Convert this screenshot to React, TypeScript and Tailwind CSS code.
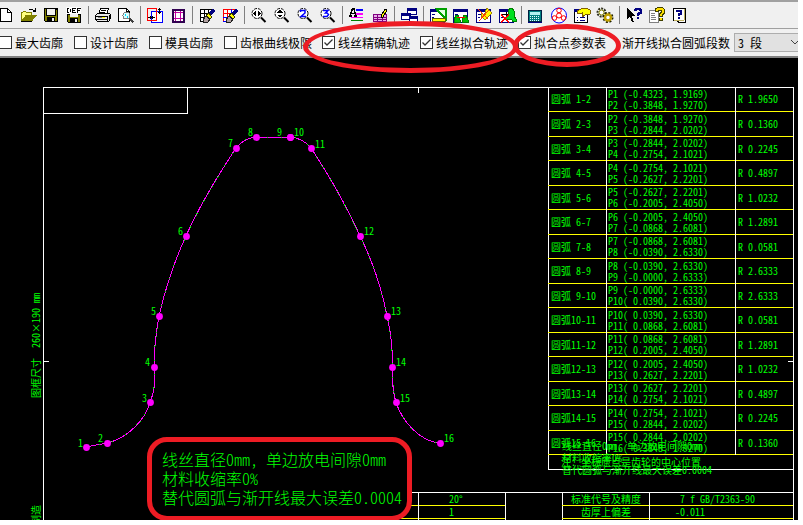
import React from "react";

type Kids = { children?: React.ReactNode };

/* ---------- toolbar icons ---------- */

function Icon({ children }: Kids) {
  return (
    <svg width="19" height="17" viewBox="0 0 19 17" fill="none" shapeRendering="crispEdges" aria-hidden="true">
      {children}
    </svg>
  );
}

const NewIcon = (
  <Icon>
    <path d="M4.5 1.5H11.5L15.5 5.5V14.5H4.5Z" fill="#fff" stroke="#000" />
    <path d="M11.5 1.5V5.5H15.5" stroke="#000" />
  </Icon>
);

const OpenIcon = (
  <Icon>
    <path d="M10 2.5H14M14 3.5H16M16.5 1V5M14 4.5H17" stroke="#000" />
    <path d="M2.5 13.5V5.5H3.5L4.5 4.5H6.5L7.5 5.5H12.5V8.5H7L3 13.5Z" fill="#ffff80" stroke="#808000" />
    <path d="M3 13.5L7 8.5H17L13 13.5Z" fill="#808000" stroke="#808000" />
    <path d="M2 14.5H13" stroke="#000" />
  </Icon>
);

const SaveIcon = (
  <Icon>
    <path d="M2.5 1.5H15.5V14.5H3.5L2.5 13.5Z" fill="#808000" stroke="#000" />
    <rect x="5" y="2" width="8" height="6" fill="#f0f0f0" />
    <rect x="5" y="10" width="8" height="4" fill="#000" />
    <rect x="10" y="11" width="2" height="3" fill="#f0f0f0" />
    <path d="M14 2.5H15M4.5 2V8.5H13.5V2" stroke="#000" />
  </Icon>
);

const DefIcon = (
  <Icon>
    <path d="M2.5 7.5H15.5V15.5H3.5L2.5 14.5Z" fill="#808000" stroke="#000" />
    <rect x="5" y="7" width="8" height="3" fill="#f0f0f0" />
    <rect x="5" y="11" width="8" height="4" fill="#000" />
    <rect x="10" y="12" width="2" height="3" fill="#f0f0f0" />
    <rect x="1" y="0" width="15" height="7" fill="#fff" />
    <path d="M2.5 1V6M3 1.5H4M3 5.5H4M5.500 2V5M7.5 1V6M8 1.5H11M8 3.5H10M8 5.5H11M12.5 1V6M13 1.5H16M13 3.5H15" stroke="#000" />
  </Icon>
);

const PrintIcon = (
  <Icon>
    <path d="M6.5 1.5H14.5L12.5 7.5H4.5Z" fill="#fff" stroke="#000" />
    <path d="M7 3.5H12M6 5.5H11" stroke="#000" />
    <path d="M1.5 8.5L3.5 6.5H15.5L16.5 7.5V11.5L14.5 14.5H3.5L1.5 12.5Z" fill="#e8e8e8" stroke="#000" />
    <path d="M2 9.5H13M2 12.5H13M13.5 9V14M15.5 8V12" stroke="#000" />
    <path d="M4 10.5H8" stroke="#808080" />
    <path d="M8 10.5H11" stroke="#ffff00" />
  </Icon>
);

const PreviewIcon = (
  <Icon>
    <path d="M1.5 1.5H9.5L12.5 4.5V14.5H1.5Z" fill="#fff" stroke="#000" />
    <path d="M9.5 1.5V4.5H12.5" stroke="#000" />
    <circle cx="9.5" cy="8.5" r="3.5" fill="#d8ffff" stroke="#808080" />
    <path d="M8 7.500H9M10 9.500H11" stroke="#00d8ff" strokeWidth="2" />
    <path d="M12 11.500L16.500 15.500" stroke="#404040" strokeWidth="2" />
  </Icon>
);

const ShiftIcon = (
  <Icon>
    <rect x="5.5" y="4.5" width="11" height="11" fill="#fff" stroke="#0000ff" />
    <rect x="1.500" y="1.500" width="9" height="12" stroke="#ff0000" />
    <path d="M2 10.500H9M4.500 9V12M6.500 9V12M13.500 1V7M12 2.500H15M12 5.500H15" stroke="#000" />
  </Icon>
);

const FrameIcon = (
  <Icon>
    <path d="M3 2H15V15H3Z" fill="#fff" />
    <path d="M6.500 2V15M11.500 2V15M3 5.500H15M3 11.500H15" stroke="#c000a0" />
    <rect x="3.500" y="2.500" width="11" height="12" stroke="#300050" strokeWidth="2" />
  </Icon>
);

function GridBrush({ a, b }: { a: string; b: string }) {
  return (
    <Icon>
      <path d="M2 2H14V8L8 14H2Z" fill="#fff" />
      <path d="M2.500 2V14M2 2.500H15M2 6.500H12M6.500 2V13" stroke={a} />
      <path d="M2 10.500H9M10.500 2V8M14.500 2V5M2 14.500H7" stroke={b} />
      <path d="M12 7L16 3" stroke="#000080" strokeWidth="3" />
      <path d="M8 8L11 6L14 10L12 12Z" fill="#ffff00" stroke="#303000" />
      <path d="M5 13L8 9L12 12L10 15H5Z" fill="#b0a0a0" stroke="#202020" />
    </Icon>
  );
}

function Lens({ children }: Kids) {
  return (
    <Icon>
      <circle cx="7" cy="6.500" r="5" fill="#fff" stroke="#000" shapeRendering="auto" strokeDasharray="3 1" />
      <path d="M11 10.500L15.500 15" stroke="#000" strokeWidth="2" shapeRendering="auto" />
      {children}
    </Icon>
  );
}

const LensH = (
  <Lens>
    <path d="M3 6.500L6 4V9ZM11 6.500L8 4V9Z" fill="#000" />
  </Lens>
);
const LensV = (
  <Lens>
    <path d="M7 2.500L10 5.500H4ZM7 10.500L10 7.500H4Z" fill="#000" />
  </Lens>
);
const Lens2 = (
  <Lens>
    <path d="M4.500 5V3.500H9V6L5 9.500H10" stroke="#0000ff" strokeWidth="1.500" shapeRendering="auto" />
  </Lens>
);
const Lens3 = (
  <Lens>
    <path d="M4 3.500H9L6.500 6H8L9.500 7.500L8 9.500H4" stroke="#0000ff" strokeWidth="1.500" shapeRendering="auto" />
  </Lens>
);

const FontLinesIcon = (
  <Icon>
    <path d="M8 3H15" stroke="#0000ff" strokeWidth="2" />
    <path d="M8 7H15" stroke="#ff00ff" strokeWidth="2" />
    <path d="M3 10.500H15" stroke="#ff00ff" />
    <path d="M3 13.500H15" stroke="#008000" />
    <path d="M2 8.500L4.500 2H6L8 9M3 6.500H8M1 9H4M6 9H9" stroke="#000" strokeWidth="1.500" />
  </Icon>
);

const TablePenIcon = (
  <Icon>
    <path d="M2.500 7.500H15.500V14.500H2.500ZM2 10.500H16M2 12.500H16M6.500 7V15M11.500 7V15" fill="#e8b0e8" stroke="#800080" />
    <path d="M10 9L14 2L16 3L12 10L10 11Z" fill="#ffff00" stroke="#000" />
  </Icon>
);

const WindowsIcon = (
  <Icon>
    <path d="M7.500 1.500H16.500V7.500H7.500Z" fill="#fff" stroke="#000080" />
    <path d="M7 2.500H17" stroke="#000080" strokeWidth="3" />
    <path d="M1.500 6.500H10.500V12.500H1.500Z" fill="#fff" stroke="#000080" />
    <path d="M1 7.500H11" stroke="#000080" strokeWidth="3" />
    <path d="M9.500 9.500H17.500V15.500H9.500Z" fill="#fff" stroke="#000080" />
    <path d="M9 10.500H18" stroke="#000080" strokeWidth="3" />
  </Icon>
);

function WindowIcon({ children }: Kids) {
  return (
    <Icon>
      <rect x="1.500" y="2.500" width="14" height="13" fill="#fff" stroke="#000080" />
      <rect x="1" y="2" width="15" height="3" fill="#000080" />
      <path d="M3 7.500H6M3 10.500H5" stroke="#000080" />
      {children}
    </Icon>
  );
}

const RulerIcon = (
  <WindowIcon>
    <path d="M7 1.500H16.500V11.500Z" fill="#e0ffe0" stroke="#00a000" strokeWidth="2" />
    <rect x="3.500" y="11.500" width="13" height="3" fill="#ffff00" stroke="#606000" />
  </WindowIcon>
);
const BellsIcon = (
  <WindowIcon>
    <path d="M2 15V13L4 8H6L8 13V15ZM10 15V13L12 8H14L16 13V15Z" fill="#00c000" stroke="#008000" />
    <path d="M5 10.500H13" stroke="#ff0000" />
  </WindowIcon>
);
const CheckWindowIcon = (
  <WindowIcon>
    <path d="M6 5L9 8L12 1L17 6L10 13L6 9Z" fill="#ffff00" stroke="#a08000" />
    <path d="M3 2L13 12M4 14L14 3" stroke="#ff4000" />
  </WindowIcon>
);
const BellCrossIcon = (
  <WindowIcon>
    <path d="M7 12L10 9V4L12 1H14L16 4V9L18 12V14H14V13Z" fill="#00e020" stroke="#008000" />
    <path d="M3 8L11 15M11 8L3 15" stroke="#ff0000" strokeWidth="1.500" />
    <path d="M4 7.500H10M8 5V9" stroke="#000" />
  </WindowIcon>
);

const CalcIcon = (
  <Icon>
    <rect x="1.500" y="3.500" width="13" height="11" fill="#008080" stroke="#002040" />
    <rect x="3" y="5" width="10" height="3" fill="#b0f0f0" />
    <path d="M3 9.500H13M3 11.500H13M3 13.500H13" stroke="#e0ffff" strokeDasharray="1 1" />
    <path d="M1 15.500H15" stroke="#000080" />
  </Icon>
);

const BearingIcon = (
  <Icon>
    <g shapeRendering="auto">
      <circle cx="9" cy="8.500" r="7.500" stroke="#0000ff" fill="#fff" />
      <circle cx="9" cy="8.500" r="2.500" stroke="#ff0000" />
      <circle cx="9" cy="3.500" r="2.300" stroke="#ff0000" />
      <circle cx="4.500" cy="11" r="2.300" stroke="#ff0000" />
      <circle cx="13.500" cy="11" r="2.300" stroke="#ff0000" />
    </g>
  </Icon>
);

const HandPageIcon = (
  <Icon>
    <rect x="1.500" y="3.500" width="13" height="12" fill="#fff" stroke="#000" />
    <rect x="1" y="2" width="5" height="3" fill="#000080" />
    <path d="M4 4L9 1.500H14L17 3V7L12 8L9 10V6L5 7Z" fill="#ffff00" stroke="#806000" />
    <path d="M4 10.500H5M7 10.500H12M4 13.500H5M7 13.500H12" stroke="#000080" />
  </Icon>
);

const GearsIcon = (
  <Icon>
    <g shapeRendering="auto">
      <circle cx="5.500" cy="5.500" r="4" stroke="#303020" strokeWidth="2" strokeDasharray="2 1" fill="#fff" />
      <circle cx="5.500" cy="5.500" r="2.500" stroke="#808000" />
      <circle cx="12" cy="10.500" r="4.500" stroke="#202000" strokeWidth="2" strokeDasharray="2 1.500" />
      <circle cx="12" cy="10.500" r="3" stroke="#c0a000" strokeWidth="2.500" fill="#fff" />
    </g>
  </Icon>
);

const WhatsThisIcon = (
  <Icon>
    <path d="M2 1V12L5 9.500L7 15H9L7 9H10Z" fill="#000" />
    <path d="M10 3.500V3H11V2H15V3H16V6H14V7H13V9M13 10V12" stroke="#000080" strokeWidth="2" />
  </Icon>
);

const HelpPagesIcon = (
  <Icon>
    <path d="M1.500 3.500H10.500V15.500H1.500Z" fill="#fff" stroke="#808080" />
    <path d="M3 6.500H7M3 8.500H7M3 10.500H8M3 12.500H8" stroke="#808080" />
    <path d="M8.500 5V3L10 2H14L15 3V5.500L12.500 8V10M12.500 11V14" stroke="#404000" strokeWidth="4" />
    <path d="M8.500 4V3L10 2H14L15 3V5.500L12.500 8V9M12.500 11V13" stroke="#ffe000" strokeWidth="2" />
  </Icon>
);

const HelpIcon = (
  <Icon>
    <path d="M2.500 1.500H14.500V15.500H8L6 13.500H2.500Z" fill="#fff" stroke="#000" />
    <path d="M3 13.500H13M13.500 2V13" stroke="#c0b060" />
    <path d="M6 5V4H10V7H8V9M8 10V12" stroke="#000080" strokeWidth="2" />
  </Icon>
);

const toolGroups: { label: string; icon: React.ReactNode }[][] = [
  [
    { label: "新建", icon: NewIcon },
    { label: "打开", icon: OpenIcon },
    { label: "保存", icon: SaveIcon },
    { label: "保存默认", icon: DefIcon },
  ],
  [
    { label: "打印", icon: PrintIcon },
    { label: "打印预览", icon: PreviewIcon },
  ],
  [
    { label: "平移", icon: ShiftIcon },
    { label: "图框", icon: FrameIcon },
  ],
  [
    { label: "刷新网格", icon: <GridBrush a="#000" b="#000" /> },
    { label: "刷新颜色", icon: <GridBrush a="#ff0000" b="#0000ff" /> },
  ],
  [
    { label: "水平缩放", icon: LensH },
    { label: "垂直缩放", icon: LensV },
    { label: "缩放 2", icon: Lens2 },
    { label: "缩放 3", icon: Lens3 },
  ],
  [
    { label: "线型", icon: FontLinesIcon },
    { label: "编辑表格", icon: TablePenIcon },
  ],
  [{ label: "窗口", icon: WindowsIcon }],
  [
    { label: "测量", icon: RulerIcon },
    { label: "齿廓对比", icon: BellsIcon },
    { label: "检查", icon: CheckWindowIcon },
    { label: "删除齿廓", icon: BellCrossIcon },
  ],
  [
    { label: "计算器", icon: CalcIcon },
    { label: "行星轮", icon: BearingIcon },
    { label: "属性", icon: HandPageIcon },
    { label: "齿轮", icon: GearsIcon },
  ],
  [
    { label: "这是什么", icon: WhatsThisIcon },
    { label: "帮助文档", icon: HelpPagesIcon },
    { label: "帮助", icon: HelpIcon },
  ],
];

function Toolbar() {
  return (
    <div className="flex h-[28px] shrink-0 items-center overflow-hidden border-t-2 border-[#a0a0a0] bg-[#f0f0f0]">
      <div className="-ml-1.5 flex items-center">
        {toolGroups.map((group, g) => (
          <React.Fragment key={g}>
            {g > 0 && (
              <div className="flex w-1.5 shrink-0 pl-0.5">
                <div className="h-[18px] w-px bg-[#808080]" />
              </div>
            )}
            {group.map((tool) => (
              <button key={tool.label} type="button" aria-label={tool.label} className="flex h-[23px] w-[23px] shrink-0 items-center justify-center">
                {tool.icon}
              </button>
            ))}
          </React.Fragment>
        ))}
      </div>
    </div>
  );
}

/* ---------- option bar ---------- */

function Check({ text, checked = false, wide = false }: { text: string; checked?: boolean; wide?: boolean }) {
  return (
    <label className={"relative flex shrink-0 items-center gap-[3px] whitespace-nowrap " + (wide ? "w-[98px]" : "w-[75px]")}>
      <input type="checkbox" defaultChecked={checked} className="peer h-[13px] w-[13px] shrink-0 appearance-none border border-[#333333] bg-white" />
      <svg className="pointer-events-none absolute left-0 hidden peer-checked:block" width="13" height="13" viewBox="0 0 13 13" fill="none" aria-hidden="true">
        <path d="M2.500 6.500L5 9L10.500 3.500" stroke="#333" strokeWidth="1.300" />
      </svg>
      <span>{text}</span>
    </label>
  );
}

function OptionBar() {
  return (
    <div className="flex h-[30px] shrink-0 items-center overflow-hidden border-t border-b-2 border-t-[#a0a0a0] border-b-[#808080] bg-[#f0f0f0] text-[12px] leading-[18px] text-black">
      <div className="-ml-px flex flex-1 items-center">
        <Check text="最大齿廓" />
        <Check text="设计齿廓" />
        <Check text="模具齿廓" />
        <Check text="齿根曲线极限" wide />
        <Check text="线丝精确轨迹" checked wide />
        <Check text="线丝拟合轨迹" checked wide />
        <Check text="拟合点参数表" checked wide />
        <label htmlFor="segments" className="shrink-0 pr-1 pl-1.5 whitespace-nowrap">
          渐开线拟合圆弧段数
        </label>
        <div className="relative min-w-0 flex-1">
          <select id="segments" defaultValue="3" className="block h-[19px] w-full appearance-none border border-r-0 border-[#adadad] bg-[#e1e1e1] pl-[3px] leading-[17px]">
            <option value="2">2 段</option>
            <option value="3">3 段</option>
            <option value="4">4 段</option>
          </select>
          <svg className="pointer-events-none absolute top-[6px] right-0" width="8" height="7" viewBox="0 0 8 7" fill="none" aria-hidden="true">
            <path d="M1 1L5 5L9 1" stroke="#444" />
          </svg>
        </div>
      </div>
    </div>
  );
}

/* ---------- tooth profile ---------- */

const profile =
  "M86 447L107 443C126 439 146 420 150 402C156 388 155 378 154 367C154 350 156 333 159 316C165 290 174 262 186 236C200 205 217 177 236 148Q244 138 256 137H290Q303 138 311 148C330 177 346 205 360 236C373 262 382 290 387 316C391 333 393 350 392 367C393 380 392 390 396 402C402 422 421 442 440 443";

const nodes: [number, number, number, number][] = [
  [86, 447, 78, 447],
  [107, 443, 98, 442],
  [150, 402, 142, 402],
  [154, 367, 145, 366],
  [159, 316, 151, 315],
  [186, 236, 178, 235],
  [236, 148, 228, 147],
  [256, 137, 248, 136],
  [290, 137, 277, 136],
  [290, 137, 294, 136],
  [311, 148, 315, 148],
  [360, 236, 364, 235],
  [387, 316, 391, 315],
  [392, 367, 396, 366],
  [396, 402, 400, 402],
  [440, 443, 444, 442],
];

function Profile() {
  return (
    <svg className="absolute top-0 left-0" width="504" height="432" viewBox="44 88 504 432" fill="none" aria-label="齿廓轨迹">
      <path d={profile} stroke="#00ff00" shapeRendering="crispEdges" />
      <path d={profile} stroke="#ff00ff" strokeDasharray="13 1" shapeRendering="crispEdges" />
      <path d="M418.500 88V93M44 361.500H49" stroke="#fff" shapeRendering="crispEdges" />
      {nodes.map(([x, y, tx, ty], i) => (
        <g key={i}>
          <circle cx={x + 0.5} cy={y + 0.5} r="3.400" fill="#ff00ff" />
          <text x={tx} y={ty} fill="#00ff00" fontSize="10">
            {i + 1}
          </text>
        </g>
      ))}
    </svg>
  );
}

/* ---------- arc table ---------- */

const pts = [
  "(-0.4323, 1.9169)",
  "(-0.3848, 1.9270)",
  "(-0.2844, 2.0202)",
  "(-0.2754, 2.1021)",
  "(-0.2627, 2.2201)",
  "(-0.2005, 2.4050)",
  "(-0.0868, 2.6081)",
  "(-0.0390, 2.6330)",
  "(-0.0000, 2.6333)",
  "( 0.0390, 2.6330)",
  "( 0.0868, 2.6081)",
  "( 0.2005, 2.4050)",
  "( 0.2627, 2.2201)",
  "( 0.2754, 2.1021)",
  "( 0.2844, 2.0202)",
  "( 0.3848, 1.9270)",
];

const radii = ["1.9650", "0.1360", "0.2245", "0.4897", "1.0232", "1.2891", "0.0581", "2.6333", "2.6333", "0.0581", "1.2891", "1.0232", "0.4897", "0.2245", "0.1360"];

const pointText = (n: number) => ("P" + n).padEnd(3) + pts[n - 1];

function ArcTable() {
  return (
    <div className="relative -mt-px w-[245px] shrink-0">
      <table className="w-full table-fixed border-collapse border-b border-l border-white whitespace-pre">
        <colgroup>
          <col className="w-[58px]" />
          <col className="w-[129px]" />
          <col />
        </colgroup>
        <tbody>
          {radii.map((r, i) => (
            <tr key={i} className="h-[24px] border-b border-[#ffff00] even:h-[25px]">
              <td className="border-r border-r-white p-0 pl-0.5">{"圆弧" + ((i < 9 ? " " : "") + (i + 1) + "-" + (i + 2))}</td>
              <td className="border-r border-r-white p-0 pl-px leading-[11px]">
                {pointText(i + 1)}
                <br />
                {pointText(i + 2)}
              </td>
              <td className="p-0 pl-0.5">{"R " + r}</td>
            </tr>
          ))}
          <tr className="h-[15px]">
            <td colSpan={3} className="p-0 pl-3 leading-[12px]">
              注：坐标原点是齿轮的中心位置
            </td>
          </tr>
        </tbody>
      </table>
      <div className="absolute -bottom-1.5 left-[14px] leading-[12px] whitespace-pre">
        线丝直径0mm, 单边放电间隙0mm
        <br />
        材料收缩率0%
        <br />
        替代圆弧与渐开线最大误差0.0004
      </div>
      <div className="absolute top-[274px] right-0 h-px w-[5px] bg-white" />
    </div>
  );
}

/* ---------- title block ---------- */

function TitleBlock() {
  const cell = "border-r border-r-white p-0";
  return (
    <div className="flex justify-end">
      <div className="flex border-t border-white">
        <table className="table-fixed border-collapse text-left">
          <tbody>
            <tr className="h-[13px] border-b border-[#ffff00] leading-[12px]">
              <td className={cell + " w-[18px]"} />
              <td className={cell + " w-[87px] pl-[30px]"}>20°</td>
            </tr>
            <tr className="h-[13px] border-b border-[#ffff00] leading-[12px]">
              <td className={cell} />
              <td className={cell + " pl-[30px]"}>1</td>
            </tr>
            <tr className="h-[2px]">
              <td className={cell} />
              <td className={cell} />
            </tr>
          </tbody>
        </table>
        <div className="w-[56px]" />
        <table className="w-[231px] table-fixed border-collapse border-l border-white whitespace-pre">
          <tbody>
            <tr className="h-[13px] border-b border-[#ffff00] text-center leading-[12px]">
              <th className={cell + " w-[87px] font-normal"}>标准代号及精度</th>
              <td className="p-0 pr-2">7 f GB/T2363-90</td>
            </tr>
            <tr className="h-[13px] border-b border-[#ffff00] leading-[12px]">
              <th className={cell + " text-center font-normal"}>齿厚上偏差</th>
              <td className="p-0 pl-[25px]">-0.011</td>
            </tr>
            <tr className="h-[2px]">
              <td className={cell} />
              <td className="p-0" />
            </tr>
          </tbody>
        </table>
      </div>
    </div>
  );
}

function Sheet() {
  return (
    <div className="relative flex min-h-0 flex-1 overflow-hidden bg-black pt-[29px] pr-1 text-[10px] text-[#00ff00]">
      <div className="flex w-[43px] shrink-0 flex-col items-end gap-2 pt-[206px] pr-px">
        <div className="h-[204px] rotate-180 text-right leading-[12px] whitespace-pre [text-orientation:sideways] [writing-mode:vertical-rl] flex items-center justify-end">
          <span className="h-[204px]">{"图框尺寸  260×190 mm"}</span>
        </div>
        <div className="rotate-180 leading-[12px] whitespace-pre [text-orientation:sideways] [writing-mode:vertical-rl]">制造</div>
      </div>
      <div className="relative flex min-w-0 flex-1 flex-col border border-b-0 border-white">
        <div className="flex justify-between">
          <div>
            <div className="h-[26px] w-[144px] border-r border-b border-white" />
            <Profile />
          </div>
          <ArcTable />
        </div>
        <div className="mt-[22px]">
          <TitleBlock />
        </div>
      </div>
      <div className="absolute top-[379px] left-[147px] h-[84px] w-[265px] rounded-[20px] border-[5px] border-[#ed1c24] bg-black pt-2 pl-[10px] text-[16px] leading-[19px] font-light whitespace-pre">
        线丝直径0mm, 单边放电间隙0mm
        <br />
        材料收缩率0%
        <br />
        替代圆弧与渐开线最大误差0.0004
      </div>
    </div>
  );
}

export default function App() {
  return (
    <div className="h-screen overflow-hidden bg-white pr-[5px] pb-[5px] font-['Noto_Sans_CJK_SC',sans-serif] [font-feature-settings:'hwid']">
      <div className="relative flex h-full flex-col">
        <Toolbar />
        <OptionBar />
        <Sheet />
        <div className="pointer-events-none absolute top-[21px] left-[303px] h-[52px] w-[215px] rounded-[50%] border-[5px] border-[#ed1c24]" />
        <div className="pointer-events-none absolute top-[24px] left-[513px] h-[43px] w-[108px] rounded-[50%] border-[5px] border-[#ed1c24]" />
      </div>
    </div>
  );
}
